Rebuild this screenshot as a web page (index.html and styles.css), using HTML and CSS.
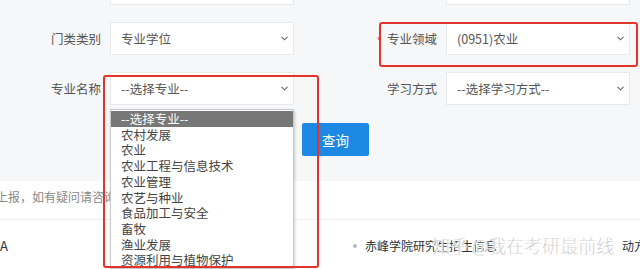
FILE: index.html
```html
<!DOCTYPE html>
<html lang="zh">
<head>
<meta charset="utf-8">
<title>专业查询</title>
<link rel="stylesheet" href="styles.css">
</head>
<body>
<div class="page">
  <section class="search">
    <div class="form">
      <div class="label"></div>
      <div class="select"><span class="val"></span><svg class="chev" width="7" height="5" viewBox="0 0 7 5"><polyline points="0.5,0.8 3.5,3.8 6.5,0.8" fill="none" stroke="#666" stroke-width="1.1"/></svg></div>
      <div class="label"></div>
      <div class="select"><span class="val"></span><svg class="chev" width="7" height="5" viewBox="0 0 7 5"><polyline points="0.5,0.8 3.5,3.8 6.5,0.8" fill="none" stroke="#666" stroke-width="1.1"/></svg></div>

      <div class="label">门类类别</div>
      <div class="select"><span class="val">专业学位</span><svg class="chev" width="7" height="5" viewBox="0 0 7 5"><polyline points="0.5,0.8 3.5,3.8 6.5,0.8" fill="none" stroke="#666" stroke-width="1.1"/></svg></div>
      <div class="label"><span class="req">*</span>专业领域</div>
      <div class="select"><span class="val">(0951)农业</span><svg class="chev" width="7" height="5" viewBox="0 0 7 5"><polyline points="0.5,0.8 3.5,3.8 6.5,0.8" fill="none" stroke="#666" stroke-width="1.1"/></svg></div>

      <div class="label">专业名称</div>
      <div class="select"><span class="val">--选择专业--</span><svg class="chev" width="7" height="5" viewBox="0 0 7 5"><polyline points="0.5,0.8 3.5,3.8 6.5,0.8" fill="none" stroke="#666" stroke-width="1.1"/></svg></div>
      <div class="label">学习方式</div>
      <div class="select"><span class="val">--选择学习方式--</span><svg class="chev" width="7" height="5" viewBox="0 0 7 5"><polyline points="0.5,0.8 3.5,3.8 6.5,0.8" fill="none" stroke="#666" stroke-width="1.1"/></svg></div>
    </div>
    <div class="actions"><button class="btn">查询</button></div>
  </section>

  <div class="notice">上报，如有疑问请咨询</div>

  <ul class="list">
    <li class="item first">A</li>
    <li class="item dot">赤峰学院研究生招生信息<span class="rest">动方式</span></li>
  </ul>

  <ul class="dropdown">
    <li class="opt active">--选择专业--</li>
    <li class="opt">农村发展</li>
    <li class="opt">农业</li>
    <li class="opt">农业工程与信息技术</li>
    <li class="opt">农业管理</li>
    <li class="opt">农艺与种业</li>
    <li class="opt">食品加工与安全</li>
    <li class="opt">畜牧</li>
    <li class="opt">渔业发展</li>
    <li class="opt">资源利用与植物保护</li>
  </ul>

  <div class="mark mark-left"></div>
  <div class="mark mark-right"></div>
  <div class="watermark">知乎 @我在考研最前线</div>
</div>
</body>
</html>
```

FILE: styles.css
```css
* { box-sizing: border-box; }
html, body {
  margin: 0;
  padding: 0;
  background: #fff;
  font-family: "Noto Sans CJK SC", "Liberation Sans", sans-serif;
  font-size: 12px;
  color: #444;
  overflow: hidden;
}
.page {
  position: relative;
  width: 640px;
  height: 269px;
  overflow: hidden;
}
.search {
  display: flow-root;
  background: #f6f7f9;
  padding-bottom: 25px;
}
.form {
  margin-top: -28px;
  display: grid;
  grid-template-columns: 101px 184px 134px 184px;
  grid-auto-rows: 33px;
  column-gap: 9px;
  row-gap: 17px;
}
.label {
  display: flex;
  align-items: center;
  justify-content: flex-end;
  color: #555;
  font-size: 12.5px;
  position: relative;
}
.req {
  color: #e0403a;
  font-size: 11px;
  margin-right: 5px;
  align-self: flex-start;
  margin-top: 10px;
}
.select {
  background: #fff;
  border: 1px solid #e8e9ec;
  display: flex;
  align-items: center;
  justify-content: space-between;
  padding: 0 5px 0 10px;
}
.val {
  color: #555;
  font-size: 12.5px;
}
.chev { display: block; }
.actions {
  margin-top: 18px;
  padding-left: 302px;
}
.btn {
  width: 67px;
  height: 33px;
  border: 0;
  border-radius: 2px;
  background: #1e88e5;
  color: #fff;
  font-family: inherit;
  font-size: 13.5px;
  padding: 0;
}
.notice {
  padding: 8px 0 15px;
  line-height: 15px;
  margin-left: -4px;
  color: #888;
  font-size: 12px;
  border-bottom: 1px solid #eeeff1;
}
.list {
  list-style: none;
  margin: 0;
  padding: 16px 0 0;
  display: flex;
  line-height: 20px;
}
.item {
  color: #333;
  font-size: 12px;
  white-space: nowrap;
}
.first {
  flex: 0 0 350px;
  font-size: 13px;
}
.dot {
  display: flex;
  align-items: center;
}
.dot::before {
  content: "";
  width: 4px;
  height: 4px;
  border-radius: 50%;
  background: #bbb;
  margin: 0 8px 0 3px;
}
.rest { margin-left: 125px; }
.dropdown {
  position: absolute;
  left: 110px;
  top: 109px;
  width: 184px;
  margin: 0;
  padding: 1px 0 0;
  list-style: none;
  background: #fff;
  border: 1px solid #c8c8c8;
  box-shadow: 1px 2px 3px rgba(0,0,0,0.18);
}
.opt {
  font-size: 12.5px;
  line-height: 15.7px;
  padding-left: 10px;
  color: #444;
}
.opt.active {
  background: #777;
  color: #fff;
}
.mark {
  position: absolute;
  border: 2px solid #e2332c;
  border-radius: 3px;
}
.mark-left {
  left: 103px;
  top: 75px;
  width: 216px;
  height: 193px;
}
.mark-right {
  left: 379px;
  top: 22px;
  width: 259px;
  height: 45px;
}
.watermark {
  position: absolute;
  left: 432px;
  top: 232px;
  font-size: 18px;
  line-height: 26px;
  color: #b4b4b4;
  -webkit-text-stroke: 0.3px #fff;
  text-shadow: 0 0 1px #fff, 0 0 2px #fff;
  white-space: nowrap;
  font-family: "Noto Sans CJK SC", sans-serif;
  font-weight: 300;
}
```
